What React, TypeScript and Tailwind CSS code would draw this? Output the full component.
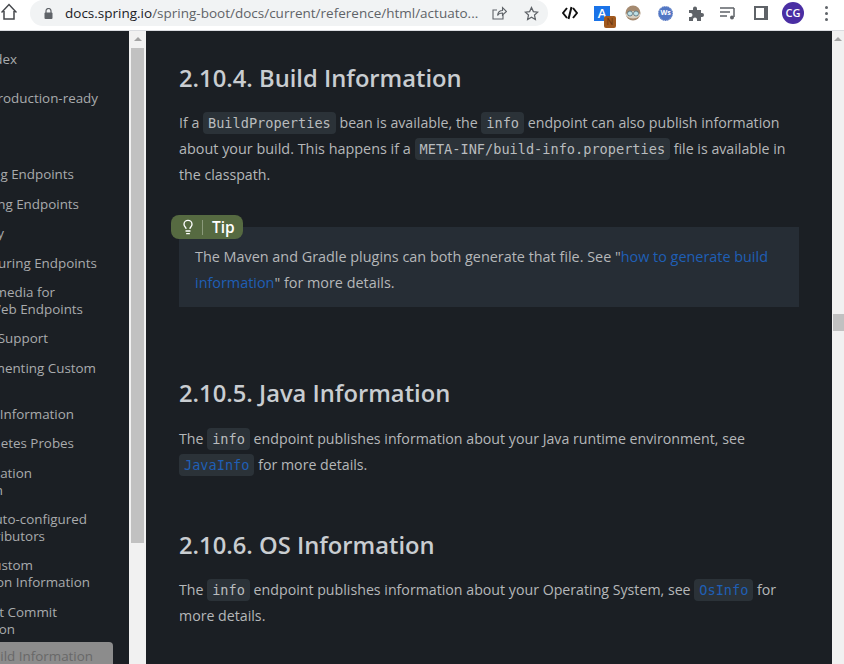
import { Lightbulb } from 'lucide-react'

const navItems = [
  { lines: [{ text: 'Index', end: 'w-[17px]' }], mt: 'mt-[20px]' },
  { lines: [{ text: 'Production-ready', end: 'w-[98px]' }], mt: 'mt-[22px]' },
  { lines: [{ text: 'Enabling Endpoints', end: 'w-[74px]' }], mt: 'mt-[59px]' },
  { lines: [{ text: 'Exposing Endpoints', end: 'w-[79px]' }], mt: 'mt-[13px]' },
  { lines: [{ text: 'Security', end: 'w-[4px]' }], mt: 'mt-[12px]' },
  { lines: [{ text: 'Configuring Endpoints', end: 'w-[97px]' }], mt: 'mt-[13px]' },
  {
    lines: [
      { text: 'Hypermedia for', end: 'w-[55px]' },
      { text: 'Actuator Web Endpoints', end: 'w-[83px]' },
    ],
    mt: 'mt-[12px]',
  },
  { lines: [{ text: 'CORS Support', end: 'w-[48px]' }], mt: 'mt-[12px]' },
  { lines: [{ text: 'Implementing Custom', end: 'w-[96px]' }], mt: 'mt-[13px]' },
  { lines: [{ text: 'Health Information', end: 'w-[74px]' }], mt: 'mt-[29px]' },
  { lines: [{ text: 'Kubernetes Probes', end: 'w-[74px]' }], mt: 'mt-[12px]' },
  {
    lines: [
      { text: 'Application', end: 'w-[32px]' },
      { text: 'Information', end: 'w-[3px]' },
    ],
    mt: 'mt-[13px]',
  },
  {
    lines: [
      { text: 'Auto-configured', end: 'w-[87px]' },
      { text: 'InfoContributors', end: 'w-[45px]' },
    ],
    mt: 'mt-[12px]',
  },
  {
    lines: [
      { text: 'Custom', end: 'w-[33px]' },
      { text: 'Application Information', end: 'w-[90px]' },
    ],
    mt: 'mt-[12px]',
  },
  {
    lines: [
      { text: 'Git Commit', end: 'w-[57px]' },
      { text: 'Information', end: 'w-[15px]' },
    ],
    mt: 'mt-[13px]',
  },
]

function Code({ children, link }: { children: string; link?: boolean }) {
  return (
    <code
      className={`rounded-[4px] bg-[#2b3238] px-[5px] py-[3px] font-['DejaVu_Sans_Mono',monospace] text-[13.6px] leading-none ${
        link ? 'text-[#1f5fb5]' : 'text-[#b9bcbe]'
      }`}
    >
      {children}
    </code>
  )
}

function Toolbar() {
  return (
    <header className="flex h-[31px] items-start border-b border-[#dadce0] bg-white">
      <svg className="ml-[1px] mt-[3px] h-[17px] w-[16px]" viewBox="0 0 16 17" fill="none" stroke="#45484c" strokeWidth="1.5">
        <path d="M0.5 9.5 L8 1.5 L15.5 9.5 M3 8 V16 H13 V8" />
      </svg>
      <div className="ml-[13px] flex h-[26px] w-[518px] items-center rounded-[13px] bg-[#f1f3f4] pl-[14px]">
        <svg className="h-[11px] w-[9px]" viewBox="0 0 9 11">
          <path d="M2 5 V3 a2.5 2.5 0 0 1 5 0 V5" fill="none" stroke="#5f6368" strokeWidth="1.2" />
          <rect x="0.5" y="4.5" width="8" height="6.5" rx="1" fill="#5f6368" />
        </svg>
        <span className="ml-[12px] w-[414px] whitespace-nowrap text-[13.5px] text-[#5f6368]">
          <span className="text-[#202124]">docs.spring.io</span>/spring-boot/docs/current/reference/html/actuato...
        </span>
        <svg className="ml-[13px] h-[14px] w-[15px]" viewBox="0 0 15 14" fill="none" stroke="#5f6368" strokeWidth="1.1">
          <path d="M11 9 V13 H1 V4 H5 M5.5 9.5 C6 6 8 4.5 10.5 4.5 V1.5 L14.5 5.5 L10.5 9 V7 C8.5 7 6.5 7.5 5.5 9.5 Z" />
        </svg>
        <svg className="ml-[17px] h-[15px] w-[15px]" viewBox="0 0 24 24" fill="none" stroke="#5f6368" strokeWidth="2">
          <path d="M12 2.5 L15 9 L22 9.8 L16.8 14.5 L18.2 21.5 L12 18 L5.8 21.5 L7.2 14.5 L2 9.8 L9 9 Z" />
        </svg>
      </div>
      <div className="flex h-[26px] items-center">
        <svg className="ml-[14px] h-[14px] w-[16px]" viewBox="0 0 16 14" fill="none" stroke="#111" strokeWidth="2">
          <path d="M5 2 L1 7 L5 12 M11 2 L15 7 L11 12 M9.5 1 L6.5 13" />
        </svg>
        <div className="relative ml-[16px] flex h-[15px] w-[16px] items-center justify-center bg-[#1a73e8] text-[13px] font-semibold leading-none text-white">
          A
          <span className="absolute left-[10px] top-[10px] flex h-[12px] w-[12px] items-center justify-center rounded-[2px] bg-[#a0591f] text-[9px] font-normal text-[#6b3510]">
            N
          </span>
        </div>
        <svg className="ml-[15px] h-[16px] w-[16px]" viewBox="0 0 16 16">
          <circle cx="8" cy="8" r="7.5" fill="#a58a70" />
          <path d="M1 9 Q8 3 15 9 V11 Q8 16 1 11 Z" fill="#d8cfc0" />
          <circle cx="5" cy="8.5" r="2.5" fill="#bfe0e6" stroke="#55707a" strokeWidth="0.8" />
          <circle cx="11" cy="8.5" r="2.5" fill="#bfe0e6" stroke="#55707a" strokeWidth="0.8" />
        </svg>
        <div className="ml-[17px] flex h-[15px] w-[15px] items-center justify-center rounded-full border border-dotted border-[#a9b8dd] bg-[#5277c4] text-[7px] font-bold text-white">
          Ws
        </div>
        <svg className="ml-[16px] h-[15px] w-[15px]" viewBox="0 0 15 15" fill="#5f6368">
          <path d="M0 4 H4 V2.5 a2 2 0 0 1 4 0 V4 H12 V7 H13 a2 2 0 0 1 0 4 H12 V15 H8 V13.5 a2 2 0 0 0 -4 0 V15 H0 V11 H1.5 a2 2 0 0 0 0 -4 H0 Z" />
        </svg>
        <svg className="ml-[16px] h-[14px] w-[16px]" viewBox="0 0 16 14" fill="none" stroke="#5f6368" strokeWidth="1.5">
          <path d="M0 2 H14 M0 6 H10 M0 10 H7 M14 2 V11" />
          <circle cx="12" cy="11.5" r="2" fill="#5f6368" stroke="none" />
        </svg>
        <div className="ml-[18px] flex h-[14px] w-[14px] justify-start border-[2px] border-[#5f6368] bg-[#5f6368]">
          <div className="h-full w-[8px] bg-white" />
        </div>
        <div className="ml-[14px] flex h-[22px] w-[22px] items-center justify-center rounded-full bg-[#4a2ea3] text-[11px] font-semibold text-white">
          CG
        </div>
        <div className="ml-[21px] flex flex-col gap-[3px]">
          <span className="h-[3px] w-[3px] rounded-full bg-[#5f6368]" />
          <span className="h-[3px] w-[3px] rounded-full bg-[#5f6368]" />
          <span className="h-[3px] w-[3px] rounded-full bg-[#5f6368]" />
        </div>
      </div>
    </header>
  )
}

function Sidebar() {
  return (
    <aside className="h-full w-[129px] shrink-0 overflow-hidden bg-[#1b1f24] text-[13.4px] leading-[17px] text-[#a9abad]">
      {navItems.map((item) => (
        <div key={item.lines[0].text} className={item.mt}>
          {item.lines.map((line) => (
            <div key={line.text} className={`${line.end} flex justify-end whitespace-nowrap`}>
              {line.text}
            </div>
          ))}
        </div>
      ))}
      <div className="mt-[4px] h-[40px] w-[113px] rounded-tr-[4px] bg-[#8c8c8c] pt-[6px] text-[#686868]">
        <div className="flex w-[93px] justify-end whitespace-nowrap">Build Information</div>
      </div>
    </aside>
  )
}

function Scrollbar({ width, track, thumb }: { width: string; track: string; thumb: string }) {
  return (
    <div className={`${width} h-full shrink-0 bg-[#f1f1f1]`}>
      <div className="mx-auto mt-[6px] h-0 w-0 border-x-[4px] border-b-[4px] border-x-transparent border-b-[#a3a3a3]" />
      <div className={`${track} ${thumb} bg-[#c1c1c1]`} />
    </div>
  )
}

export default function App() {
  return (
    <div className="flex h-[664px] w-[844px] flex-col overflow-hidden bg-white font-['Open_Sans',sans-serif]">
      <Toolbar />
      <div className="flex min-h-0 flex-1">
        <Sidebar />
        <Scrollbar width="w-[17px]" track="mt-[7px]" thumb="mx-[2px] h-[495px]" />
        <main className="w-[686px] shrink-0 overflow-hidden bg-[#1b1f24] pl-[33px] pr-[33px] text-[14.2px] leading-[26px] text-[#b5b7b9]">
          <h2 className="mt-[30px] text-[23.75px] font-semibold leading-[34px] text-[#c9cdd1]">2.10.4. Build Information</h2>
          <p className="mt-[15px] whitespace-nowrap">
            If a <Code>BuildProperties</Code> bean is available, the <Code>info</Code> endpoint can also publish information
            <br />
            <span className="text-[14.4px]">about your build. This happens if a </span>
            <Code>META-INF/build-info.properties</Code> file is available in
            <br />
            the classpath.
          </p>
          <div className="relative mt-[39px] h-[80px] w-[620px] bg-[#262d35] pl-[16px] pt-[17px]">
            <div className="absolute -left-[8px] -top-[12px] flex h-[24px] w-[72px] items-center rounded-[8px] bg-[#566a41] pl-[9px] text-white">
              <Lightbulb size={16} />
              <span className="ml-[6px] h-[15px] w-px bg-[#8b9a7b]" />
              <span className="ml-[9px] text-[15.5px] font-semibold">Tip</span>
            </div>
            <p className="whitespace-nowrap text-[14.4px]">
              The Maven and Gradle plugins can both generate that file. See "<a className="text-[#1f5fb5]">how to generate build</a>
              <br />
              <a className="text-[#1f5fb5]">information</a>" for more details.
            </p>
          </div>
          <h2 className="mt-[69px] text-[23.75px] font-semibold leading-[34px] text-[#c9cdd1]">2.10.5. Java Information</h2>
          <p className="mt-[16px] whitespace-nowrap">
            The <Code>info</Code> endpoint publishes information about your Java runtime environment, see
            <br />
            <Code link>JavaInfo</Code> for more details.
          </p>
          <h2 className="mt-[50px] text-[23.75px] font-semibold leading-[34px] text-[#c9cdd1]">2.10.6. OS Information</h2>
          <p className="mt-[15px] whitespace-nowrap">
            The <Code>info</Code> endpoint publishes information about your Operating System, see <Code link>OsInfo</Code> for
            <br />
            more details.
          </p>
        </main>
        <Scrollbar width="w-[12px]" track="mt-[273px]" thumb="ml-[1px] h-[17px]" />
      </div>
    </div>
  )
}
